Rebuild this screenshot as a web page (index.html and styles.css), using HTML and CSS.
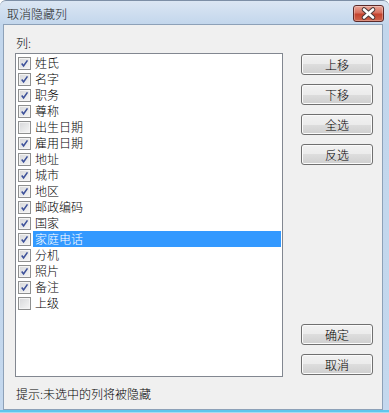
FILE: index.html
```html
<!DOCTYPE html>
<html lang="zh-CN">
<head>
  <meta charset="UTF-8">
  <title>取消隐藏列</title>
  <link rel="stylesheet" href="styles.css">
</head>
<body>

<div class="window">
  <div class="titlebar">
    <span class="title">取消隐藏列</span>
    <button class="close">
      <svg width="31" height="17" viewBox="0 0 31 17">
        <path d="M11 4.5 L20 12.5 M20 4.5 L11 12.5" stroke="#4a3a3a" stroke-width="4.6" stroke-linecap="round"/>
        <path d="M11 4.5 L20 12.5 M20 4.5 L11 12.5" stroke="#ffffff" stroke-width="2.6" stroke-linecap="round"/>
      </svg>
    </button>
  </div>

  <div class="client">
    <div class="columns">
      <div class="label">列:</div>

      <ul class="list">
        <li><span class="box on"><svg viewBox="0 0 13 13"><path d="M3.2 6.4 L5.4 9.4 L10 2.8"/></svg></span><span class="text">姓氏</span></li>
        <li><span class="box on"><svg viewBox="0 0 13 13"><path d="M3.2 6.4 L5.4 9.4 L10 2.8"/></svg></span><span class="text">名字</span></li>
        <li><span class="box on"><svg viewBox="0 0 13 13"><path d="M3.2 6.4 L5.4 9.4 L10 2.8"/></svg></span><span class="text">职务</span></li>
        <li><span class="box on"><svg viewBox="0 0 13 13"><path d="M3.2 6.4 L5.4 9.4 L10 2.8"/></svg></span><span class="text">尊称</span></li>
        <li><span class="box"></span><span class="text">出生日期</span></li>
        <li><span class="box on"><svg viewBox="0 0 13 13"><path d="M3.2 6.4 L5.4 9.4 L10 2.8"/></svg></span><span class="text">雇用日期</span></li>
        <li><span class="box on"><svg viewBox="0 0 13 13"><path d="M3.2 6.4 L5.4 9.4 L10 2.8"/></svg></span><span class="text">地址</span></li>
        <li><span class="box on"><svg viewBox="0 0 13 13"><path d="M3.2 6.4 L5.4 9.4 L10 2.8"/></svg></span><span class="text">城市</span></li>
        <li><span class="box on"><svg viewBox="0 0 13 13"><path d="M3.2 6.4 L5.4 9.4 L10 2.8"/></svg></span><span class="text">地区</span></li>
        <li><span class="box on"><svg viewBox="0 0 13 13"><path d="M3.2 6.4 L5.4 9.4 L10 2.8"/></svg></span><span class="text">邮政编码</span></li>
        <li><span class="box on"><svg viewBox="0 0 13 13"><path d="M3.2 6.4 L5.4 9.4 L10 2.8"/></svg></span><span class="text">国家</span></li>
        <li class="selected"><span class="box on"><svg viewBox="0 0 13 13"><path d="M3.2 6.4 L5.4 9.4 L10 2.8"/></svg></span><span class="text">家庭电话</span></li>
        <li><span class="box on"><svg viewBox="0 0 13 13"><path d="M3.2 6.4 L5.4 9.4 L10 2.8"/></svg></span><span class="text">分机</span></li>
        <li><span class="box on"><svg viewBox="0 0 13 13"><path d="M3.2 6.4 L5.4 9.4 L10 2.8"/></svg></span><span class="text">照片</span></li>
        <li><span class="box on"><svg viewBox="0 0 13 13"><path d="M3.2 6.4 L5.4 9.4 L10 2.8"/></svg></span><span class="text">备注</span></li>
        <li><span class="box"></span><span class="text">上级</span></li>
      </ul>

      <div class="buttons">
        <button class="btn">上移</button>
        <button class="btn">下移</button>
        <button class="btn">全选</button>
        <button class="btn">反选</button>
        <button class="btn ok">确定</button>
        <button class="btn">取消</button>
      </div>
    </div>

    <div class="hint">提示:未选中的列将被隐藏</div>
  </div>
</div>

</body>
</html>
```

FILE: styles.css
```css
body {
  margin: 0;
  padding: 0;
  font-family: "Noto Sans CJK SC", sans-serif;
  font-size: 12px;
  font-weight: 300;
  line-height: 16px;
  color: #000000;
  background-color: #ffffff;
}

.window {
  width: 389px;
  height: 413px;
  box-sizing: border-box;
  display: flex;
  flex-direction: column;
  border-top: 1px solid #7d8fa6;
  border-radius: 6px 6px 0 0;
  background:
    linear-gradient(to top, #a6dcf1 1px, #5ec6ec 1px, #5ec6ec 3px, transparent 3px),
    linear-gradient(#dbe6f3, #c2d6ec 24px, #c4d8ee);
}

.titlebar {
  height: 23px;
  display: flex;
  justify-content: space-between;
  align-items: flex-start;
}

.title {
  margin: 5px 0 0 7px;
  font-size: 12px;
  color: #1e1e1e;
}

.close {
  width: 31px;
  height: 17px;
  margin: 4px 5px 0 0;
  padding: 0;
  border: 1px solid #5b2a2a;
  border-radius: 3px;
  background: linear-gradient(#eaa597, #d7705f 45%, #c4432f 55%, #d0644c);
  box-shadow: inset 0 0 0 1px rgba(255, 255, 255, 0.3);
  display: flex;
  align-items: center;
  justify-content: center;
}

.close svg {
  display: block;
  margin: -1px;
}

.client {
  flex: 1;
  margin: 0 6px 3px 3px;
  border: 1px solid #8da1b8;
  background-color: #f0f0f0;
  padding: 10px 0 0 11px;
}

.columns {
  display: grid;
  grid-template-columns: 268px 72px;
  column-gap: 18px;
}

.label {
  grid-column: 1;
  padding-left: 1px;
  margin-bottom: 2px;
}

.list {
  grid-column: 1;
  grid-row: 2;
  height: 324px;
  box-sizing: border-box;
  margin: 0;
  padding: 1px 1px 0 0;
  list-style: none;
  background-color: #ffffff;
  border: 1px solid #828790;
}

.list li {
  height: 16px;
  display: flex;
  align-items: center;
}

.box {
  width: 11px;
  height: 11px;
  margin-left: 2px;
  border: 1px solid #8e8f8f;
  background: linear-gradient(135deg, #d6d7d9, #f6f6f6);
  box-shadow: inset 0 0 0 1px #f4f4f4;
  flex-shrink: 0;
}

.box svg {
  display: block;
  width: 11px;
  height: 11px;
}

.box svg path {
  fill: none;
  stroke: #3d519a;
  stroke-width: 1.9;
}

.text {
  flex: 1;
  margin-left: 2px;
  padding-left: 2px;
  height: 16px;
}

.selected .text {
  background-color: #3399ff;
  color: #ffffff;
}

.buttons {
  grid-column: 2;
  grid-row: 2;
  display: flex;
  flex-direction: column;
  gap: 9px;
  padding: 1px 0 2px;
}

.btn {
  height: 21px;
  padding: 0;
  font-family: "Noto Sans CJK SC", sans-serif;
  font-size: 12px;
  font-weight: 300;
  color: #000000;
  border: 1px solid #707070;
  border-radius: 3px;
  background: linear-gradient(#f2f2f2, #ebebeb 50%, #dddddd 50%, #cfcfcf);
  box-shadow: inset 0 0 0 1px #fbfbfb;
}

.btn.ok {
  margin-top: auto;
}

.hint {
  margin-top: 9px;
  padding-left: 1px;
}
```
